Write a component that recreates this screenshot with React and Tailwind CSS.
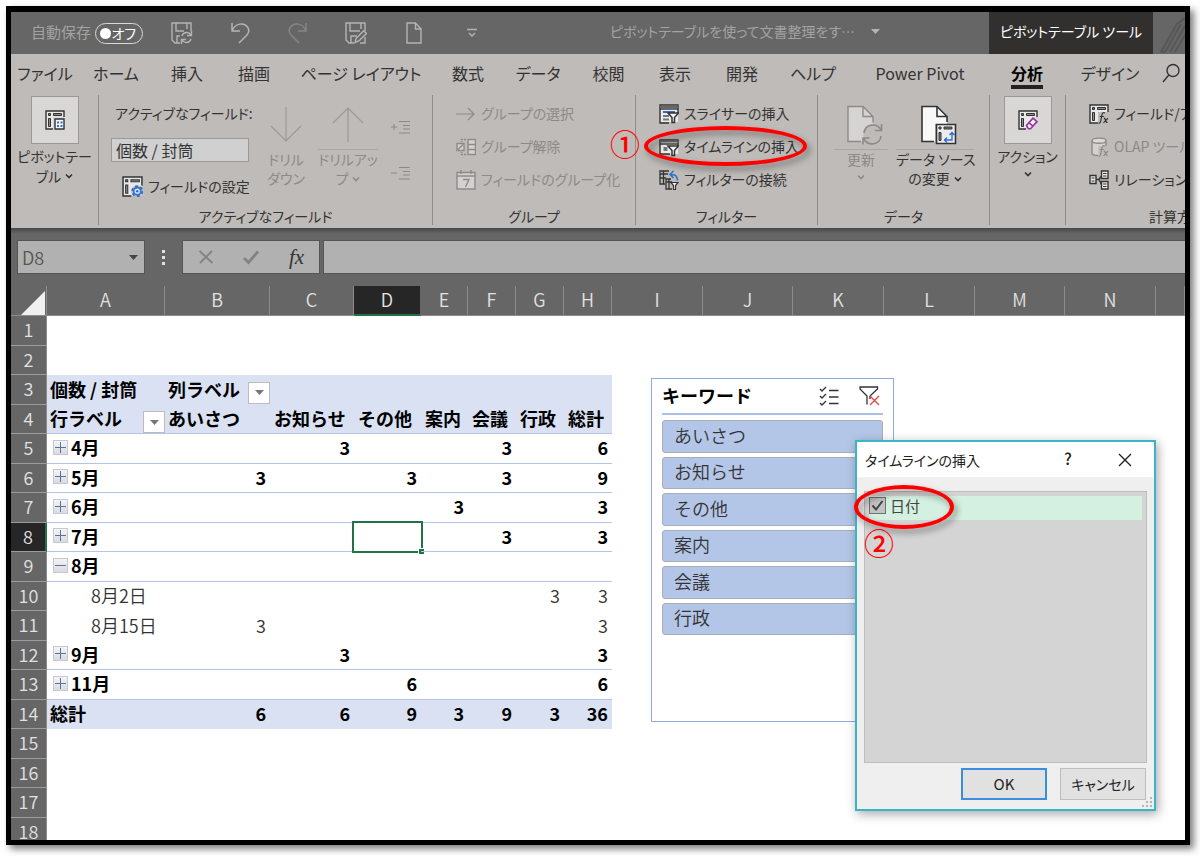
import { useState } from "react";

const uiFont =
  "font-['Noto_Sans_CJK_JP',sans-serif] [font-feature-settings:'palt']";
const sheetFont =
  "font-['Noto_Sans_CJK_JP',sans-serif] [font-feature-settings:normal]";

/* ---------- icons ---------- */

const Icon = ({ className = "w-5 h-5", box = "0 0 20 20", children }) => (
  <svg
    className={`shrink-0 ${className}`}
    viewBox={box}
    fill="none"
    stroke="currentColor"
    strokeWidth="1.4"
    aria-hidden="true"
  >
    {children}
  </svg>
);

const Chevron = ({ className = "" }) => (
  <Icon className={`w-2 h-2 inline-block ${className}`} box="0 0 8 8">
    <path d="M1 2.5l3 3 3-3" strokeWidth="1.6" />
  </Icon>
);

const PivotFrame = () => (
  <>
    <path d="M1 1h18v18H1z" fill="#e8e8e8" stroke="none" />
    <path d="M19 9V1H1v18h8" />
    <path d="M3.5 3.5h2v2h-2z" fill="#777" strokeWidth="1" />
    <path d="M8.5 3.5h8v2h-8zM3.5 8.5h2v8h-2z" fill="#8a8a8a" strokeWidth="1" />
  </>
);

const PivotIcon = () => (
  <Icon>
    <PivotFrame />
    <path d="M8 7h12v13H8z" fill="#d8d7d6" stroke="none" />
    <path d="M10 9h9v10h-9z" fill="#f5f5f5" />
    <path
      d="M12 12.5h2M12 16h2M15.5 12.5h2M15.5 16h2"
      stroke="#2f6fd0"
      strokeWidth="2"
    />
  </Icon>
);

const FieldSettingsIcon = () => (
  <Icon className="w-[21px] h-[21px]">
    <PivotFrame />
    <circle cx="14.5" cy="14.5" r="5.6" fill="#bfbbb8" stroke="none" />
    <circle
      cx="14.5"
      cy="14.5"
      r="4.8"
      stroke="#2f6fd0"
      strokeWidth="1.8"
      strokeDasharray="2.6 2.4"
    />
    <circle cx="14.5" cy="14.5" r="3.4" fill="#dbe6f6" stroke="#2f6fd0" strokeWidth="1.6" />
    <circle cx="14.5" cy="14.5" r="1.2" fill="#2f6fd0" stroke="none" />
  </Icon>
);

const EraserIcon = () => (
  <Icon>
    <PivotFrame />
    <path d="M8 15l6.5-7.5L20 7v13H8z" fill="#d8d7d6" stroke="none" />
    <path
      d="M8.5 15.5L15 8.200l4 3.400-6.500 7.200h-2z"
      fill="#f5f5f5"
      stroke="#9a2fa0"
      strokeWidth="1.6"
    />
    <path d="M11 12.8l4 3.4" stroke="#9a2fa0" strokeWidth="1.6" />
  </Icon>
);

const Fx = () => (
  <path
    d="M16 9c-1.8-1-2.8 0-3.1 2l-1.2 6c-.3 1.8-1 2.4-2.2 2M10.8 12.5h4M14.8 14.2c1.8-.6 1.7 4.6 3.8 4.3M19 14.200l-4.500 4.600"
    strokeWidth="1.2"
  />
);

const FieldFxIcon = () => (
  <Icon>
    <PivotFrame />
    <path d="M9 8h11v12H9z" fill="#bfbbb8" stroke="none" />
    <Fx />
  </Icon>
);

const OlapIcon = () => (
  <Icon>
    <path d="M3 4h14v14H5l-2-2z" fill="#d4d2d0" stroke="none" />
    <ellipse cx="10" cy="3.7" rx="7" ry="2.6" fill="#dcdad8" />
    <path d="M3 4v12c0 1.6 2.5 2.5 6 2.5M17 10V4" />
    <path d="M9.5 9h11v12h-11z" fill="#bfbbb8" stroke="none" />
    <Fx />
  </Icon>
);

const RelationsIcon = () => (
  <Icon>
    <path
      d="M1 5.5h6v8H1zM12.5 1H19v7.500h-6.500zM12.500 11.500H19V19h-6.500z"
      fill="#ececec"
    />
    <path
      d="M2.500 8h3M2.500 11h3M14 3.500h3.500M14 6h3.500M14 14h3.500M14 16.500h3.500"
      strokeWidth="1.2"
    />
    <path d="M7 9.500h3M10 9.500l2-3M10 9.500l2.500 5" />
  </Icon>
);

const FunnelShape = () => (
  <path d="M9 9h10.500l-4 4.500v5H13v-5z" fill="#f5f5f5" strokeWidth="1.5" />
);

const SlicerIcon = () => (
  <Icon>
    <path d="M1 1h18v17H1z" fill="#ececec" stroke="none" />
    <path d="M10 19H1V1h18v8" />
    <path d="M1 3h18" strokeWidth="2" stroke="#666" />
    <path d="M1 5h18" />
    <path d="M4 8h12" stroke="#2f6fd0" strokeWidth="2" />
    <path d="M4 12h6M4 15.500h6" strokeWidth="2" stroke="#777" />
    <FunnelShape />
  </Icon>
);

const TimelineIcon = () => (
  <Icon>
    <path d="M1 3h18v14H1z" fill="#ececec" stroke="none" />
    <path d="M11 17H1V3h18v6" />
    <path d="M1 4.500h18" strokeWidth="2" stroke="#666" />
    <path d="M1 7h18" />
    <path d="M4.500 12h4" strokeWidth="4" stroke="#777" />
    <FunnelShape />
  </Icon>
);

const FilterLinkIcon = () => (
  <Icon>
    <path d="M6 14H1V1h9M1 4h8M4.500 1v13M1 8h6" strokeWidth="1.3" />
    <path d="M12 9H7v10h6M7 12h6M10 9v10" strokeWidth="1.3" />
    <path
      d="M11 4.500c5-.5 7.500 1.500 7.500 6M14.500 1L11 4.500 14.500 8"
      stroke="#2f6fd0"
      strokeWidth="1.6"
    />
    <path d="M12 12.500h7l-2.500 3v4h-2v-4z" fill="#f5f5f5" strokeWidth="1.2" />
  </Icon>
);

const ArrowRightIcon = () => (
  <Icon>
    <path d="M0 10h18M12 4l6 6-6 6" strokeWidth="1.2" />
  </Icon>
);

const UngroupIcon = () => (
  <Icon>
    <path d="M12 2.500h7.500v15H12z" fill="#d4d2d0" />
    <path d="M12 7.500h7.500M12 12.500h7.500" />
    <path d="M10 2.500H5.500V5M10 17.500H5.500V15" strokeDasharray="2 1" />
    <path d="M1 6.500h7v7H1z" fill="#d4d2d0" />
    <path d="M2 12.500l5-5" />
  </Icon>
);

const CalendarIcon = () => (
  <Icon>
    <path d="M1 2.500h18V19H1z" fill="#d4d2d0" />
    <path d="M1 6h18M5 0v4M15 0v4" />
    <path d="M7 9.500h6l-3.500 7.500" />
  </Icon>
);

const RefreshDocIcon = () => (
  <Icon className="w-9 h-10" box="0 0 36 40">
    <path
      d="M1 1.500h15l10 10V20c-6 0-10 5-9.500 11v5.500H1z"
      fill="#d6d4d2"
      stroke="none"
    />
    <path d="M14 36.500H1v-35h15l10 10v6M16 1.500v10h10" />
    <path
      d="M17 28c1-9 13-11 17-3M34.500 19v6.500H28M34 31c-1 9-13 10.500-17 3M16 39.500V33h6.500"
      strokeWidth="1.6"
    />
  </Icon>
);

const SourceDocIcon = () => (
  <Icon className="w-9 h-10" box="0 0 36 40">
    <path d="M1 1.500h15l10 10V19H14v17.500H1z" fill="#f8f8f8" stroke="none" />
    <path d="M13 36.500H1v-35h15l10 10V17M16 1.500v10h10" strokeWidth="1.6" />
    <path d="M15.500 19.500h19v19h-19z" fill="#ececec" strokeWidth="1.6" />
    <path d="M18 22h2v2h-2zM23 22h8v2h-8zM18 27.500h2v8h-2z" fill="#777" strokeWidth="1" />
    <path
      d="M31 28v7h-7M28.500 30l2.500-2.500 2.500 2.500M26 32.500L23.500 35l2.500 2.500"
      stroke="#2f6fd0"
    />
  </Icon>
);

const OutlineIcon = ({ sign }) => (
  <Icon className="w-5 h-4" box="0 0 20 16">
    <path d={sign === "plus" ? "M0 8h6M3 5v6" : "M0 8h6"} strokeWidth="1" />
    <path d="M8 2.500h11M12 6.500h7M12 10h7M8 14h11" strokeWidth="1.2" />
  </Icon>
);

const SaveSyncIcon = () => (
  <Icon className="w-[22px] h-[22px]" box="0 0 22 22">
    <path d="M9 21H4l-3-3V1h19v8M5 1v8h8M16 1v6" />
    <path d="M6 21v-7h3" />
    <path d="M11 14c1.500-4.500 7-4.500 9-1M20.500 9v4.500H16M20 17c-1.500 4.500-7 4.500-9 1M10.500 22v-4.500H15" />
  </Icon>
);

const SaveEditIcon = () => (
  <Icon className="w-[22px] h-[22px]" box="0 0 22 22">
    <path d="M9 21H4l-3-3V1h19v8M5 1v8h10M16 1v6M6 21v-7h6M20 15v6h-5" />
    <path d="M10 20.500l1.200-4.200 7.500-7.500 2.700 2.700-7.500 7.500z" />
  </Icon>
);

const UndoIcon = () => (
  <Icon className="w-5 h-[22px]" box="0 0 20 22">
    <path d="M2 1v8h8M2 9c3-8 12-9 15.500-4 2 3 1.500 6-1 8.500L9 21" strokeWidth="1.5" />
  </Icon>
);

const RedoIcon = () => (
  <Icon className="w-5 h-[22px] text-[#858585]" box="0 0 20 22">
    <path d="M18 1v8h-8M18 9C15 1 6 0 2.500 5c-2 3-1.500 6 1 8.500L11 21" strokeWidth="1.5" />
  </Icon>
);

const NewDocIcon = () => (
  <Icon className="w-4 h-[22px]" box="0 0 16 22">
    <path d="M1 1h8.500l5.500 6v14H1zM9.500 1v6H15" />
  </Icon>
);

const MoreIcon = () => (
  <Icon className="w-[10px] h-[10px]" box="0 0 10 10">
    <path d="M0 1.500h10M2 5l3 3 3-3" />
  </Icon>
);

/* ---------- title bar and tabs ---------- */

const quickActions = [
  { label: "保存", icon: <SaveSyncIcon /> },
  { label: "元に戻す", icon: <UndoIcon /> },
  { label: "やり直し", icon: <RedoIcon /> },
  { label: "名前を付けて保存", icon: <SaveEditIcon /> },
  { label: "新規作成", icon: <NewDocIcon /> },
  { label: "カスタマイズ", icon: <MoreIcon /> },
];

const TitleBar = () => (
  <header className="flex h-[42px] shrink-0 items-stretch bg-[#666666] text-sm text-[#b4b4b4]">
    <div className="flex w-[142px] shrink-0 items-center gap-1 pl-5 text-[#a3a3a3]">
      <span className="whitespace-nowrap pb-[3px] text-[15px]">自動保存</span>
      <button
        aria-label="自動保存"
        className="flex h-[21px] w-12 shrink-0 items-center justify-between rounded-full border border-[#d8d8d8] pl-1 pr-[6px] leading-4 text-white"
      >
        <span className="h-[11px] w-[11px] rounded-full bg-white" />
        オフ
      </button>
    </div>
    {quickActions.map((action) => (
      <button
        key={action.label}
        aria-label={action.label}
        className="flex w-[58px] shrink-0 items-center justify-center"
      >
        {action.icon}
      </button>
    ))}
    <div className="flex min-w-0 flex-1 items-center justify-center gap-4 whitespace-nowrap pb-1 text-[#a3a3a3]">
      ピボットテーブルを使って文書整理をす…
      <svg className="h-[5px] w-[9px]" viewBox="0 0 9 5" fill="#b4b4b4">
        <path d="M0 0h9L4.500 5z" />
      </svg>
    </div>
    <div className="flex w-[164px] shrink-0 items-center justify-center whitespace-nowrap bg-[#32302e] pb-1 text-white">
      ピボットテーブル ツール
    </div>
    <svg className="w-8 shrink-0" viewBox="0 0 32 42" fill="none" stroke="#575757" strokeWidth="2">
      <path d="M8 40L24 12l8-6M12 40l16-28M17 40l15-26M22 40l10-17M8 40h4" />
    </svg>
  </header>
);

const tabs = [
  { label: "ファイル", width: "w-[68px]" },
  { label: "ホーム", width: "w-[74px]" },
  { label: "挿入", width: "w-[68px]" },
  { label: "描画", width: "w-[66px]" },
  { label: "ページ レイアウト", width: "w-[148px]" },
  { label: "数式", width: "w-[66px]" },
  { label: "データ", width: "w-[74px]" },
  { label: "校閲", width: "w-[67px]" },
  { label: "表示", width: "w-[66px]" },
  { label: "開発", width: "w-[68px]" },
  { label: "ヘルプ", width: "w-[74px]" },
  { label: "Power Pivot", width: "w-[140px]" },
  { label: "分析", width: "w-[74px]" },
  { label: "デザイン", width: "w-[92px]" },
];

const Tabs = () => {
  const [active, setActive] = useState("分析");

  return (
    <nav className="flex h-[41px] shrink-0 overflow-hidden bg-[#bfbbb8] text-base text-[#333]">
      {tabs.map(({ label, width }) => (
        <button
          key={label}
          onClick={() => setActive(label)}
          className={`flex h-[35px] shrink-0 justify-center whitespace-nowrap ${width} ${
            active === label ? "font-bold text-black" : ""
          }`}
        >
          <span
            className={`flex h-[35px] items-center border-b-4 pt-[6px] ${
              active === label ? "border-[#222]" : "border-transparent"
            }`}
          >
            {label}
          </span>
        </button>
      ))}
      <button aria-label="検索" className="flex h-[38px] items-center pl-[6px]">
        <Icon className="w-[18px] h-5" box="0 0 18 20">
          <circle cx="11" cy="7.5" r="6" />
          <path d="M6.800 12L1 19" />
        </Icon>
      </button>
    </nav>
  );
};

/* ---------- ribbon ---------- */

const Group = ({ label, className, children }) => (
  <section
    className={`relative flex shrink-0 flex-col border-r border-[#8f8c8a] ${className}`}
  >
    <div className="h-28">{children}</div>
    <div className="h-[18px] whitespace-nowrap text-center leading-[18px]">{label}</div>
  </section>
);

const Command = ({ icon, label, muted }) => (
  <button
    className={`flex h-[33px] items-center gap-[5px] whitespace-nowrap ${
      muted ? "text-[#8d8a88]" : "text-[#333]"
    }`}
  >
    {icon}
    <span className="pb-0.5">{label}</span>
  </button>
);

const BigCommand = ({ icon, lines, className = "" }) => (
  <button className={`flex flex-col items-center whitespace-nowrap leading-5 ${className}`}>
    <span className="mb-0.5 flex h-12 w-12 items-center justify-center border border-[#9b9997] bg-[#d8d7d6]">
      {icon}
    </span>
    {lines}
  </button>
);

const Ribbon = () => (
  <div className="flex h-[133px] shrink-0 overflow-hidden bg-[#bfbbb8] pb-[3px] text-sm text-[#333]">
    <Group className="w-[88px]">
      <BigCommand
        className="w-full pt-px"
        icon={<PivotIcon />}
        lines={
          <>
            <span>ピボットテー</span>
            <span className="flex items-center gap-1">
              ブル <Chevron />
            </span>
          </>
        }
      />
    </Group>

    <Group label="アクティブなフィールド" className="w-[334px]">
      <div className="flex pl-3">
        <div className="w-[138px]">
          <label
            htmlFor="active-field"
            className="block h-[43px] whitespace-nowrap pl-1 leading-[36px]"
          >
            アクティブなフィールド:
          </label>
          <input
            id="active-field"
            defaultValue="個数 / 封筒"
            className="h-6 w-full border border-[#9b9997] bg-[#d0d0d0] px-1 text-base [font-feature-settings:normal]"
          />
          <div className="pl-[11px] pt-2">
            <Command icon={<FieldSettingsIcon />} label="フィールドの設定" />
          </div>
        </div>
        <button className="ml-2 flex w-[58px] flex-col items-center pt-3 leading-[19px] text-[#8d8a88]">
          <Icon className="mb-2 w-8 h-[35px] text-[#9c9997]" box="0 0 32 35">
            <path d="M16 0v34M1 19l15 15 15-15" strokeWidth="1.2" />
          </Icon>
          <span>ドリル</span>
          <span>ダウン</span>
        </button>
        <button className="ml-1 flex w-[58px] flex-col items-center whitespace-nowrap pt-3 leading-[19px] text-[#8d8a88]">
          <Icon className="w-8 h-[35px] text-[#9c9997]" box="0 0 32 35">
            <path d="M16 35V1M1 16L16 1l15 15" strokeWidth="1.2" />
          </Icon>
          <span className="mt-[7px] border-t border-[#a9a6a4]">ドリルアッ</span>
          <span className="flex items-center gap-1">
            プ <Chevron />
          </span>
        </button>
        <div className="ml-[14px] flex flex-col gap-[30px] pt-6 text-[#8d8a88]">
          <button aria-label="フィールドの展開">
            <OutlineIcon sign="plus" />
          </button>
          <button aria-label="フィールドの折りたたみ">
            <OutlineIcon sign="minus" />
          </button>
        </div>
      </div>
    </Group>

    <Group label="グループ" className="w-[203px]">
      <div className="flex flex-col pl-[23px] pt-[2px]">
        <Command muted icon={<ArrowRightIcon />} label="グループの選択" />
        <Command muted icon={<UngroupIcon />} label="グループ解除" />
        <Command muted icon={<CalendarIcon />} label="フィールドのグループ化" />
      </div>
    </Group>

    <Group label="フィルター" className="w-[182px]">
      <div className="flex flex-col pl-[23px] pt-[2px]">
        <Command icon={<SlicerIcon />} label="スライサーの挿入" />
        <Command icon={<TimelineIcon />} label="タイムラインの挿入" />
        <Command icon={<FilterLinkIcon />} label="フィルターの接続" />
      </div>
      <div className="absolute -left-[26px] top-[30px] z-20 text-[30px] font-medium leading-9 text-[#f00]">
        ①
      </div>
      <div className="absolute left-2 top-[31px] z-20 h-10 w-[163px] rounded-[50%] border-4 border-[#f00] drop-shadow-[3px_4px_3px_rgba(0,0,0,0.4)]" />
    </Group>

    <Group label="データ" className="w-[172px]">
      <div className="flex leading-[19px]">
        <button className="ml-4 flex w-[54px] flex-col items-center pt-[10px] text-[#8d8a88]">
          <span className="pl-[7px]">
            <RefreshDocIcon />
          </span>
          <span className="mt-1 w-full border-t border-[#a9a6a4]">更新</span>
          <Chevron className="mt-1" />
        </button>
        <button className="ml-2 flex w-[78px] flex-col items-center whitespace-nowrap pt-[10px]">
          <span className="pl-[7px]">
            <SourceDocIcon />
          </span>
          <span className="mt-1 w-full border-t border-[#a9a6a4]">データ ソース</span>
          <span className="flex items-center gap-1">
            の変更 <Chevron />
          </span>
        </button>
      </div>
    </Group>

    <Group className="w-[76px]">
      <BigCommand
        className="w-full pt-px"
        icon={<EraserIcon />}
        lines={
          <>
            <span>アクション</span>
            <Chevron className="mt-1" />
          </>
        }
      />
    </Group>

    <section className="flex min-w-0 flex-1 flex-col overflow-hidden">
      <div className="flex h-28 flex-col items-start pl-[23px] pt-[2px]">
        <Command icon={<FieldFxIcon />} label="フィールド/ア" />
        <Command muted icon={<OlapIcon />} label="OLAP ツール" />
        <Command icon={<RelationsIcon />} label="リレーションシ" />
      </div>
      <div className="h-[18px] whitespace-nowrap pl-[83px] leading-[18px]">計算方</div>
    </section>
  </div>
);

/* ---------- formula bar ---------- */

const FormulaBar = () => (
  <div className="flex h-[58px] shrink-0 items-start bg-linear-to-b from-[#484848] to-[#666666] to-10% pl-[6px] pt-3">
    <div className="flex h-[34px] w-[128px] items-center border border-[#555] bg-[#b1b1b1] pr-[6px]">
      <input
        aria-label="名前ボックス"
        defaultValue="D8"
        className={`w-full min-w-0 bg-transparent pl-1 text-lg font-[350] text-[#555] ${sheetFont}`}
      />
      <svg className="h-[5px] w-[9px] shrink-0" viewBox="0 0 9 5" fill="#444">
        <path d="M0 0h9L4.500 5z" />
      </svg>
    </div>
    <div className="flex h-[34px] w-[37px] flex-col items-center justify-center gap-[3px]">
      <i className="h-[3px] w-[3px] bg-[#e0e0e0]" />
      <i className="h-[3px] w-[3px] bg-[#e0e0e0]" />
      <i className="h-[3px] w-[3px] bg-[#e0e0e0]" />
    </div>
    <div className="flex h-[34px] w-[138px] items-center justify-around border border-[#555] bg-[#b1b1b1] text-[#828282]">
      <button aria-label="キャンセル">
        <Icon className="w-4 h-4" box="0 0 16 16">
          <path d="M1.500 2l13 12M14 2L2 14" strokeWidth="1.8" />
        </Icon>
      </button>
      <button aria-label="入力">
        <Icon className="w-4 h-4" box="0 0 16 16">
          <path d="M1 9l4.500 4.500L15 2.500" strokeWidth="2.8" />
        </Icon>
      </button>
      <button className="font-['Liberation_Serif',serif] text-[21px] italic leading-6 text-[#333]">
        fx
      </button>
    </div>
    <input
      aria-label="数式バー"
      className="ml-[3px] h-[34px] min-w-0 flex-1 border border-r-0 border-[#555] bg-[#b1b1b1] px-2"
    />
  </div>
);

/* ---------- sheet ---------- */

const columns = [
  ["A", "w-[118px]"],
  ["B", "w-[105px]"],
  ["C", "w-[84px]"],
  ["D", "w-[67px]"],
  ["E", "w-[47px]"],
  ["F", "w-[48px]"],
  ["G", "w-[48px]"],
  ["H", "w-[48px]"],
  ["I", "w-[91px]"],
  ["J", "w-[90px]"],
  ["K", "w-[91px]"],
  ["L", "w-[91px]"],
  ["M", "w-[90px]"],
  ["N", "w-[91px]"],
  ["", ""],
];

// values run from column B to column H
const pivotRows = {
  5: { month: "4月", values: ["", 3, "", "", 3, "", 6] },
  6: { month: "5月", values: [3, "", 3, "", 3, "", 9] },
  7: { month: "6月", values: ["", "", "", 3, "", "", 3] },
  8: { month: "7月", values: ["", "", "", "", 3, "", 3] },
  9: { month: "8月", open: true, values: ["", "", "", "", "", "", ""] },
  10: { day: "8月2日", values: ["", "", "", "", "", 3, 3] },
  11: { day: "8月15日", values: [3, "", "", "", "", "", 3] },
  12: { month: "9月", values: ["", 3, "", "", "", "", 3] },
  13: { month: "11月", values: ["", "", 6, "", "", "", 6] },
  14: { total: "総計", values: [6, 6, 9, 3, 9, 3, 36] },
};

const FilterButton = ({ label }) => (
  <button
    aria-label={label}
    className="mt-[6px] flex h-[22px] w-[22px] shrink-0 items-center justify-center border border-[#bcbcbc] bg-white"
  >
    <svg className="h-[5px] w-[9px]" viewBox="0 0 9 5" fill="#777">
      <path d="M0 0h9L4.500 5z" />
    </svg>
  </button>
);

const Expander = ({ open }) => (
  <button
    aria-label={open ? "折りたたむ" : "展開"}
    className="h-[15px] w-[15px] shrink-0 border border-[#c3c9d6] bg-linear-to-b from-[#f4f4f4] to-[#d9dbdf] text-[#5f719c]"
  >
    <svg viewBox="0 0 13 13" stroke="currentColor" strokeWidth="1">
      <path d={open ? "M1 6.500h11" : "M1 6.500h11M6.500 1v11"} />
    </svg>
  </button>
);

const PivotRow = ({ row, selected }) => {
  const line = row.month ? "border-b border-[#b4c6e7]" : "";
  const fill = row.total ? "bg-[#d9e1f2]" : "";
  const weight = row.day ? "font-[350] text-[#333]" : "font-bold text-black";

  return (
    <>
      <td className={`pb-[3px] ${line} ${fill} ${weight}`}>
        <div
          className={`flex items-center gap-[3px] ${
            row.day ? "pl-11" : row.month ? "pl-[6px]" : "pl-[3px]"
          }`}
        >
          {row.month && <Expander open={row.open} />}
          {row.month || row.day || row.total}
        </div>
      </td>
      {row.values.map((value, i) => (
        <td
          key={i}
          className={`relative pb-[3px] pr-1 text-right ${line} ${fill} ${weight}`}
        >
          {value}
          {selected && i === 2 && (
            <span className="absolute -inset-0.5 border-2 border-[#217346]">
              <i className="absolute -bottom-[3px] -right-[3px] h-[6px] w-[6px] border-l border-t border-white bg-[#217346]" />
            </span>
          )}
        </td>
      ))}
    </>
  );
};

const headCell = "bg-[#d9e1f2] font-bold text-black";

const SheetRow = ({ n }) => {
  if (n === 3) {
    return (
      <>
        <td className={`${headCell} pb-[3px] pl-[3px]`}>個数 / 封筒</td>
        <td className={`${headCell} pl-[3px]`}>
          <div className="flex h-[29px] items-start justify-between leading-[26px]">
            列ラベル
            <FilterButton label="列ラベルのフィルター" />
          </div>
        </td>
        <td colSpan={6} className={headCell} />
      </>
    );
  }
  if (n === 4) {
    const names = ["お知らせ", "その他", "案内", "会議", "行政", "総計"];
    return (
      <>
        <td className={`${headCell} border-b border-[#b4c6e7] pl-[3px]`}>
          <div className="flex h-7 items-start justify-between leading-[26px]">
            行ラベル
            <FilterButton label="行ラベルのフィルター" />
          </div>
        </td>
        <td className={`${headCell} border-b border-[#b4c6e7] pb-[3px] pl-[3px]`}>
          あいさつ
        </td>
        {names.map((name) => (
          <td
            key={name}
            className={`${headCell} border-b border-[#b4c6e7] pb-[3px] pl-1`}
          >
            {name}
          </td>
        ))}
      </>
    );
  }
  if (pivotRows[n]) return <PivotRow row={pivotRows[n]} selected={n === 8} />;
  return <td colSpan={8} />;
};

const Sheet = () => (
  <table
    className={`w-full table-fixed border-separate border-spacing-0 whitespace-nowrap text-lg leading-6 ${sheetFont}`}
  >
    <thead>
      <tr className="h-[30px] bg-[#666666] text-[#e2e2e2]">
        <th className="w-9 border-b border-r border-[#8c8c8c] p-0">
          <svg className="ml-auto mr-px mt-1 h-6 w-6" viewBox="0 0 24 24" fill="#f0f0f0">
            <path d="M24 0v24H0z" />
          </svg>
        </th>
        {columns.map(([name, width]) => (
          <th
            key={name}
            className={`border-r p-0 pb-[3px] font-[350] ${width} ${
              name === "D"
                ? "border-b-2 border-r-[#666] border-b-[#217346] bg-[#262626]"
                : "border-b border-[#8c8c8c]"
            }`}
          >
            {name}
          </th>
        ))}
      </tr>
    </thead>
    <tbody>
      {Array.from({ length: 18 }, (_, i) => i + 1).map((n) => (
        <tr key={n} className="h-[30px] even:h-[29px] [&>td]:pt-0">
          <th
            className={`border-b border-b-[#9c9c9c] p-0 pb-[3px] font-[350] text-[#e2e2e2] ${
              n === 8
                ? "border-r-2 border-r-[#217346] bg-[#262626]"
                : "border-r border-r-[#8c8c8c] bg-[#666666]"
            }`}
          >
            {n}
          </th>
          <SheetRow n={n} />
          <td colSpan={7} />
        </tr>
      ))}
    </tbody>
  </table>
);

/* ---------- floating panels ---------- */

const keywords = ["あいさつ", "お知らせ", "その他", "案内", "会議", "行政"];

const Slicer = () => (
  <div
    className={`absolute left-[640px] top-[92px] h-[344px] w-[243px] border border-[#8faadc] bg-white px-[10px] text-lg text-[#333] ${sheetFont}`}
  >
    <div className="flex h-9 items-center border-b-2 border-[#a9c1e8]">
      <h2 className="flex-1 pb-[3px] font-bold text-black">キーワード</h2>
      <button aria-label="複数選択" className="mr-5">
        <Icon>
          <path d="M1 3l2 2 4-4M1 10l2 2 4-4M1 17l2 2 4-4" strokeWidth="1.3" />
          <path d="M10 4.500h9.500M10 11h9.500M10 17.500h9.500" />
        </Icon>
      </button>
      <button aria-label="フィルターのクリア" className="mr-[3px]">
        <Icon className="w-[21px] h-5" box="0 0 21 20">
          <path d="M8 18.500V10L1 3V1h17.500v2L11 10" strokeWidth="1.3" />
          <path d="M11 10v3" />
          <path d="M11 10l9 9M20 10l-9 9" stroke="#e04848" />
        </Icon>
      </button>
    </div>
    <div className="mt-[5px] flex h-[215px] flex-col gap-1">
      {keywords.map((word) => (
        <button
          key={word}
          className="flex flex-1 items-center rounded-[3px] border border-[#a9adb8] bg-[#b4c6e7] pb-[3px] pl-[11px] text-left font-[350] leading-6"
        >
          {word}
        </button>
      ))}
    </div>
  </div>
);

const TimelineDialog = () => {
  const [checked, setChecked] = useState(true);

  return (
    <div
      role="dialog"
      aria-label="タイムラインの挿入"
      className="absolute left-[844px] top-[154px] flex h-[371px] w-[301px] flex-col border-2 border-[#3bb4c6] bg-[#efefef] text-sm text-[#222] shadow-[2px_3px_10px_rgba(0,0,0,0.35)]"
    >
      <div className="flex h-[35px] items-center bg-white pl-2">
        <h2 className="flex-1">タイムラインの挿入</h2>
        <button aria-label="ヘルプ" className="w-6 pb-1 text-base font-medium">
          ?
        </button>
        <button aria-label="閉じる" className="ml-[38px] mr-[22px]">
          <Icon className="w-[14px] h-[14px]" box="0 0 14 14">
            <path d="M1 1l12 12M13 1L1 13" />
          </Icon>
        </button>
      </div>
      <div className="mx-[7px] mt-[14px] h-[272px] border border-[#bdbdbd] bg-[#d4d4d4] p-1">
        <label className="flex h-6 items-start gap-1 bg-[#d4f0e0] pt-px text-[15px] leading-[18px] text-[#444]">
          <span className="relative flex h-[17px] w-[17px]">
            <input
              type="checkbox"
              checked={checked}
              onChange={() => setChecked(!checked)}
              className="h-[17px] w-[17px] appearance-none border border-[#707070] bg-[#c3c3c3]"
            />
            {checked && (
              <svg
                className="pointer-events-none absolute inset-0"
                viewBox="0 0 17 17"
                fill="none"
                stroke="#444"
                strokeWidth="2"
              >
                <path d="M3.500 8.500l3.500 4 6.500-8.500" />
              </svg>
            )}
          </span>
          日付
        </label>
      </div>
      <div className="flex justify-end gap-[13px] pr-2 pt-[5px]">
        <button className="h-8 w-[86px] border-2 border-[#3a8ee0] bg-[#e1e1e1] text-[15px]">
          OK
        </button>
        <button className="h-8 w-[86px] border border-[#bdbdbd] bg-[#e1e1e1]">
          キャンセル
        </button>
      </div>
      <svg className="absolute bottom-px right-px h-3 w-3" viewBox="0 0 12 12" fill="#b5b5b5">
        <path d="M9 1h2v2H9zM9 5h2v2H9zM9 9h2v2H9zM5 5h2v2H5zM5 9h2v2H5zM1 9h2v2H1z" />
      </svg>

      <div className="absolute -left-[3px] top-[43px] h-11 w-[100px] rounded-[50%] border-4 border-[#f00] drop-shadow-[3px_4px_3px_rgba(0,0,0,0.4)]" />
      <div className="absolute left-[7px] top-[82px] text-[30px] font-medium leading-9 text-[#f00]">
        ②
      </div>
    </div>
  );
};

const App = () => {
  return (
    <div className={`h-screen bg-white pb-[11px] pl-[6px] pr-[10px] pt-[6px] ${uiFont}`}>
      <div className="flex h-full flex-col overflow-hidden border-[5px] border-t-[6px] border-black bg-white shadow-[4px_4px_7px_rgba(0,0,0,0.5)]">
        <TitleBar />
        <Tabs />
        <Ribbon />
        <FormulaBar />
        <main className="relative min-h-0 flex-1 overflow-hidden">
          <Sheet />
          <Slicer />
          <TimelineDialog />
        </main>
      </div>
    </div>
  );
};

export default App;
